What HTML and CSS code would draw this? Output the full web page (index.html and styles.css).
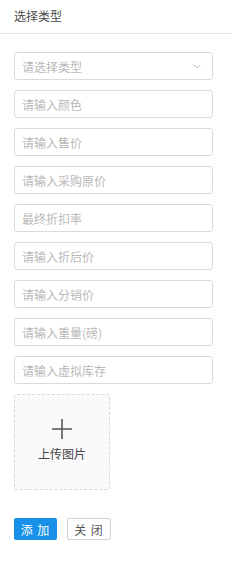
FILE: index.html
```html
<!DOCTYPE html>
<html lang="zh-CN">
<head>
  <meta charset="UTF-8" />
  <meta name="viewport" content="width=device-width, initial-scale=1" />
  <title>选择类型</title>
  <link rel="stylesheet" href="styles.css">
</head>
<body>

  <div class="titulo">选择类型</div>

  <form class="form-tipo">
    <div class="select-box">
      <input type="text" placeholder="请选择类型" readonly />
      <svg class="seta" width="8" height="5" viewBox="0 0 8 5">
        <path d="M0.5 0.5 L4 4 L7.5 0.5" fill="none" stroke="#c2c2c2" stroke-width="1" />
      </svg>
    </div>
    <input type="text" placeholder="请输入颜色" />
    <input type="text" placeholder="请输入售价" />
    <input type="text" placeholder="请输入采购原价" />
    <input type="text" placeholder="最终折扣率" />
    <input type="text" placeholder="请输入折后价" />
    <input type="text" placeholder="请输入分销价" />
    <input type="text" placeholder="请输入重量(磅)" />
    <input type="text" placeholder="请输入虚拟库存" />

    <div class="upload">
      <svg width="20" height="20" viewBox="0 0 20 20">
        <path d="M0 10 H20 M10 0 V20" stroke="#555" stroke-width="1.6" />
      </svg>
      <span>上传图片</span>
    </div>

    <div class="botoes">
      <button type="button" class="btn btn-azul">添 加</button>
      <button type="button" class="btn btn-branco">关 闭</button>
    </div>
  </form>

</body>
</html>
```

FILE: styles.css
```css
* {
  box-sizing: border-box;
  margin: 0;
  padding: 0;
}

body {
  font-family: "Noto Sans CJK SC", "Liberation Sans", sans-serif;
  background: #fff;
  width: 232px;
  color: #333;
}

.titulo {
  height: 34px;
  line-height: 32px;
  padding: 0 14px;
  font-size: 12px;
  color: #4a4a4a;
  border-bottom: 1px solid #e6e6e6;
}

.form-tipo {
  display: flex;
  flex-direction: column;
  align-items: flex-start;
  gap: 10px;
  padding: 18px 0 0 14px;
}

.form-tipo input {
  width: 199px;
  height: 28px;
  padding: 0 7px;
  font-family: inherit;
  font-size: 12px;
  color: #333;
  border: 1px solid #dadada;
  border-radius: 3px;
  outline: none;
  background: #fff;
}

.form-tipo input::placeholder {
  color: #b8b8b8;
}

.select-box {
  position: relative;
}

.seta {
  position: absolute;
  right: 12px;
  top: 12px;
}

.upload {
  width: 96px;
  height: 96px;
  border: 1px dashed #d8d8d8;
  border-radius: 3px;
  background: #fafafa;
  display: flex;
  flex-direction: column;
  align-items: center;
  justify-content: center;
  gap: 6px;
  font-size: 12px;
  color: #444;
}

.upload svg {
  margin-top: -4px;
}

.botoes {
  display: flex;
  gap: 10px;
  margin-top: 18px;
}

.btn {
  height: 22px;
  width: 43px;
  font-family: inherit;
  font-size: 12px;
  letter-spacing: 1px;
  border-radius: 2px;
  cursor: pointer;
}

.btn-azul {
  background: #1890e8;
  color: #fff;
  border: none;
}

.btn-branco {
  width: 44px;
  background: #fff;
  color: #555;
  border: 1px solid #d2d2d2;
}
```
